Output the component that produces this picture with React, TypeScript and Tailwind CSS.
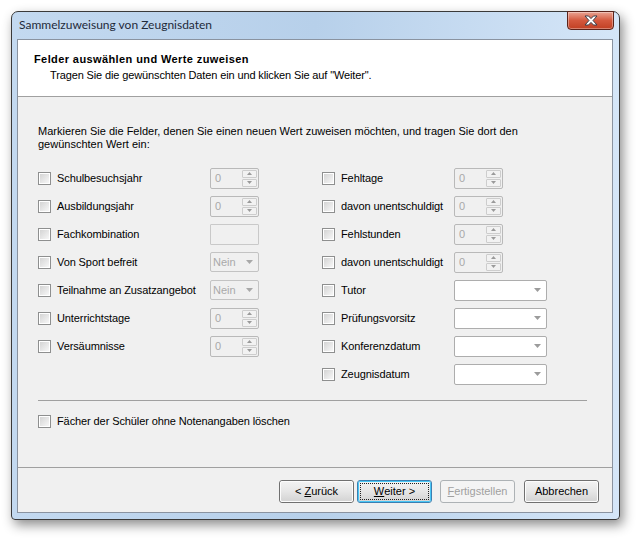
import type { ReactNode } from "react";

const leftRows: { label: string; kind: "spin" | "text" | "nein" }[] = [
  { label: "Schulbesuchsjahr", kind: "spin" },
  { label: "Ausbildungsjahr", kind: "spin" },
  { label: "Fachkombination", kind: "text" },
  { label: "Von Sport befreit", kind: "nein" },
  { label: "Teilnahme an Zusatzangebot", kind: "nein" },
  { label: "Unterrichtstage", kind: "spin" },
  { label: "Versäumnisse", kind: "spin" },
];

const rightRows: { label: string; kind: "spin" | "combo" }[] = [
  { label: "Fehltage", kind: "spin" },
  { label: "davon unentschuldigt", kind: "spin" },
  { label: "Fehlstunden", kind: "spin" },
  { label: "davon unentschuldigt", kind: "spin" },
  { label: "Tutor", kind: "combo" },
  { label: "Prüfungsvorsitz", kind: "combo" },
  { label: "Konferenzdatum", kind: "combo" },
  { label: "Zeugnisdatum", kind: "combo" },
];

function Checkbox() {
  return (
    <div className="h-[13px] w-[13px] shrink-0 border border-[#8e8f8f] bg-white p-[1px]">
      <div className="h-full w-full bg-gradient-to-br from-[#d4d4d4] to-[#f7f7f7]" />
    </div>
  );
}

function Arrow({ color = "#8c8c8c" }: { color?: string }) {
  return (
    <svg width="7" height="4" viewBox="0 0 7 4">
      <path d="M0 0 L7 0 L3.5 4 Z" fill={color} />
    </svg>
  );
}

function Spin() {
  return (
    <div className="flex h-[21px] w-[49px] items-center justify-between rounded-[2px] border border-[#b9b9b9] pl-[4px] pr-[1px]">
      <span className="text-[#a9a9a9]">0</span>
      <div className="flex flex-col gap-[1px]">
        <div className="flex h-[8px] w-[15px] items-center justify-center rounded-[1px] border border-[#cdcdcd] bg-[#f2f2f2]">
          <svg width="5" height="3" viewBox="0 0 5 3">
            <path d="M0 3 L2.5 0 L5 3 Z" fill="#9a9a9a" />
          </svg>
        </div>
        <div className="flex h-[8px] w-[15px] items-center justify-center rounded-[1px] border border-[#cdcdcd] bg-[#f2f2f2]">
          <svg width="5" height="3" viewBox="0 0 5 3">
            <path d="M0 0 L5 0 L2.5 3 Z" fill="#9a9a9a" />
          </svg>
        </div>
      </div>
    </div>
  );
}

function Control({ kind }: { kind: string }) {
  if (kind === "spin") return <Spin />;
  if (kind === "text")
    return <div className="h-[21px] w-[49px] rounded-[1px] border border-[#c9c9c9]" />;
  if (kind === "nein")
    return (
      <div className="flex h-[20px] w-[49px] items-center justify-between rounded-[2px] border border-[#c3c3c3] pl-[2px] pr-[5px] text-[#a9a9a9]">
        <span>Nein</span>
        <Arrow color="#a8a8a8" />
      </div>
    );
  return (
    <div className="flex h-[21px] w-[93px] items-center justify-end rounded-[2px] border border-[#adadad] bg-white pr-[5px]">
      <Arrow color="#9c9c9c" />
    </div>
  );
}

function Row({ label, width, children }: { label: string; width: string; children: ReactNode }) {
  return (
    <div className="flex h-[28px] items-center">
      <Checkbox />
      <span className={`ml-[6px] ${width} whitespace-nowrap tracking-[-0.1px]`}>{label}</span>
      {children}
    </div>
  );
}

function Button({
  children,
  focused,
  disabled,
}: {
  children: ReactNode;
  focused?: boolean;
  disabled?: boolean;
}) {
  if (disabled)
    return (
      <div className="flex h-[23px] w-[75px] items-center justify-center rounded-[3px] border border-[#adb2b5] bg-[#f4f4f4] text-[#a0a0a0]">
        {children}
      </div>
    );
  return (
    <div
      className={`h-[23px] w-[75px] rounded-[3px] border ${
        focused ? "border-[#3c7fb1]" : "border-[#707070]"
      }`}
    >
      <div
        className={`flex h-full w-full items-center justify-center rounded-[2px] border ${
          focused ? "border-[#48c6f5]" : "border-[#fcfcfc]"
        } bg-gradient-to-b from-[#f2f2f2] via-[#e6e6e6] to-[#d4d4d4]`}
      >
        {focused ? (
          <div className="flex h-[17px] w-[69px] items-center justify-center border border-dotted border-[#222]">
            {children}
          </div>
        ) : (
          children
        )}
      </div>
    </div>
  );
}

export default function App() {
  return (
    <div
      className="h-[538px] w-[638px] overflow-hidden bg-white pl-[11px] pt-[11px] text-[11px] leading-[13px] text-black"
      style={{ fontFamily: '"Liberation Sans", Arial, sans-serif' }}
    >
      <div className="flex h-[509px] w-[609px] flex-col rounded-t-[7px] rounded-b-[4px] border border-[#3a3a3a] bg-gradient-to-r from-[#c3d9f0] via-[#b7d0ea] to-[#d5e6f8] shadow-[3px_5px_12px_rgba(0,0,0,0.45)]">
        <div className="flex h-[27px] items-start justify-between pl-[7px]">
          <span
            className="pt-[5px] text-[12px] leading-[16px] text-[#1e2a3a]"
            style={{ fontFamily: 'Lato, "Noto Sans", sans-serif' }}
          >
            Sammelzuweisung von Zeugnisdaten
          </span>
          <div className="-mt-[1px] mr-[5px] flex h-[19px] w-[47px] items-center justify-center rounded-b-[4px] border border-[#5b231a] bg-gradient-to-b from-[#e9a392] via-[#d4583d] to-[#c13f22] shadow-[inset_0_0_0_1px_rgba(255,255,255,0.35)]">
            <svg width="14" height="11" viewBox="0 0 14 11">
              <path
                d="M1 1 L4.5 1 L7 3.6 L9.5 1 L13 1 L9 5.5 L13 10 L9.5 10 L7 7.4 L4.5 10 L1 10 L5 5.5 Z"
                fill="#ffffff"
                stroke="#3a3f4a"
                strokeWidth="1"
                strokeLinejoin="round"
              />
            </svg>
          </div>
        </div>
        <div className="mb-[6px] ml-[5px] mr-[6px] flex flex-1 flex-col border border-[#8a93a0]">
          <div className="h-[57px] border-b border-[#a0a0a0] bg-white pl-[16px] pt-[13px]">
            <div className="font-bold tracking-[0.4px]">Felder auswählen und Werte zuweisen</div>
            <div className="mt-[3px] pl-[16px] tracking-[-0.13px]">
              Tragen Sie die gewünschten Daten ein und klicken Sie auf "Weiter".
            </div>
          </div>
          <div className="flex flex-1 flex-col bg-[#f0f0f0]">
            <div className="flex flex-1 flex-col pl-[20px] pt-[28px]">
              <p className="w-[540px]">
                Markieren Sie die Felder, denen Sie einen neuen Wert zuweisen möchten, und tragen Sie
                dort den gewünschten Wert ein:
              </p>
              <div className="mt-[13px] flex">
                <div className="flex w-[284px] flex-col">
                  {leftRows.map((r) => (
                    <Row key={r.label} label={r.label} width="w-[153px]">
                      <Control kind={r.kind} />
                    </Row>
                  ))}
                </div>
                <div className="flex flex-col">
                  {rightRows.map((r, i) => (
                    <Row key={i} label={r.label} width="w-[113px]">
                      <Control kind={r.kind} />
                    </Row>
                  ))}
                </div>
              </div>
              <div className="mt-[12px] h-px w-[549px] bg-[#a0a0a0]" />
              <div className="mt-[6px]">
                <Row label="Fächer der Schüler ohne Notenangaben löschen" width="">
                  {null}
                </Row>
              </div>
            </div>
            <div className="h-px bg-[#a0a0a0]" />
            <div className="flex h-[44px] justify-end pr-[13px] pt-[12px]">
              <Button>
                &lt; <span className="ml-[3px] underline">Z</span>urück
              </Button>
              <div className="ml-[3px]">
                <Button focused>
                  <span className="underline">W</span>eiter &gt;
                </Button>
              </div>
              <div className="ml-[8px]">
                <Button disabled>
                  <span className="underline">F</span>ertigstellen
                </Button>
              </div>
              <div className="ml-[9px]">
                <Button>Abbrechen</Button>
              </div>
            </div>
          </div>
        </div>
      </div>
    </div>
  );
}
